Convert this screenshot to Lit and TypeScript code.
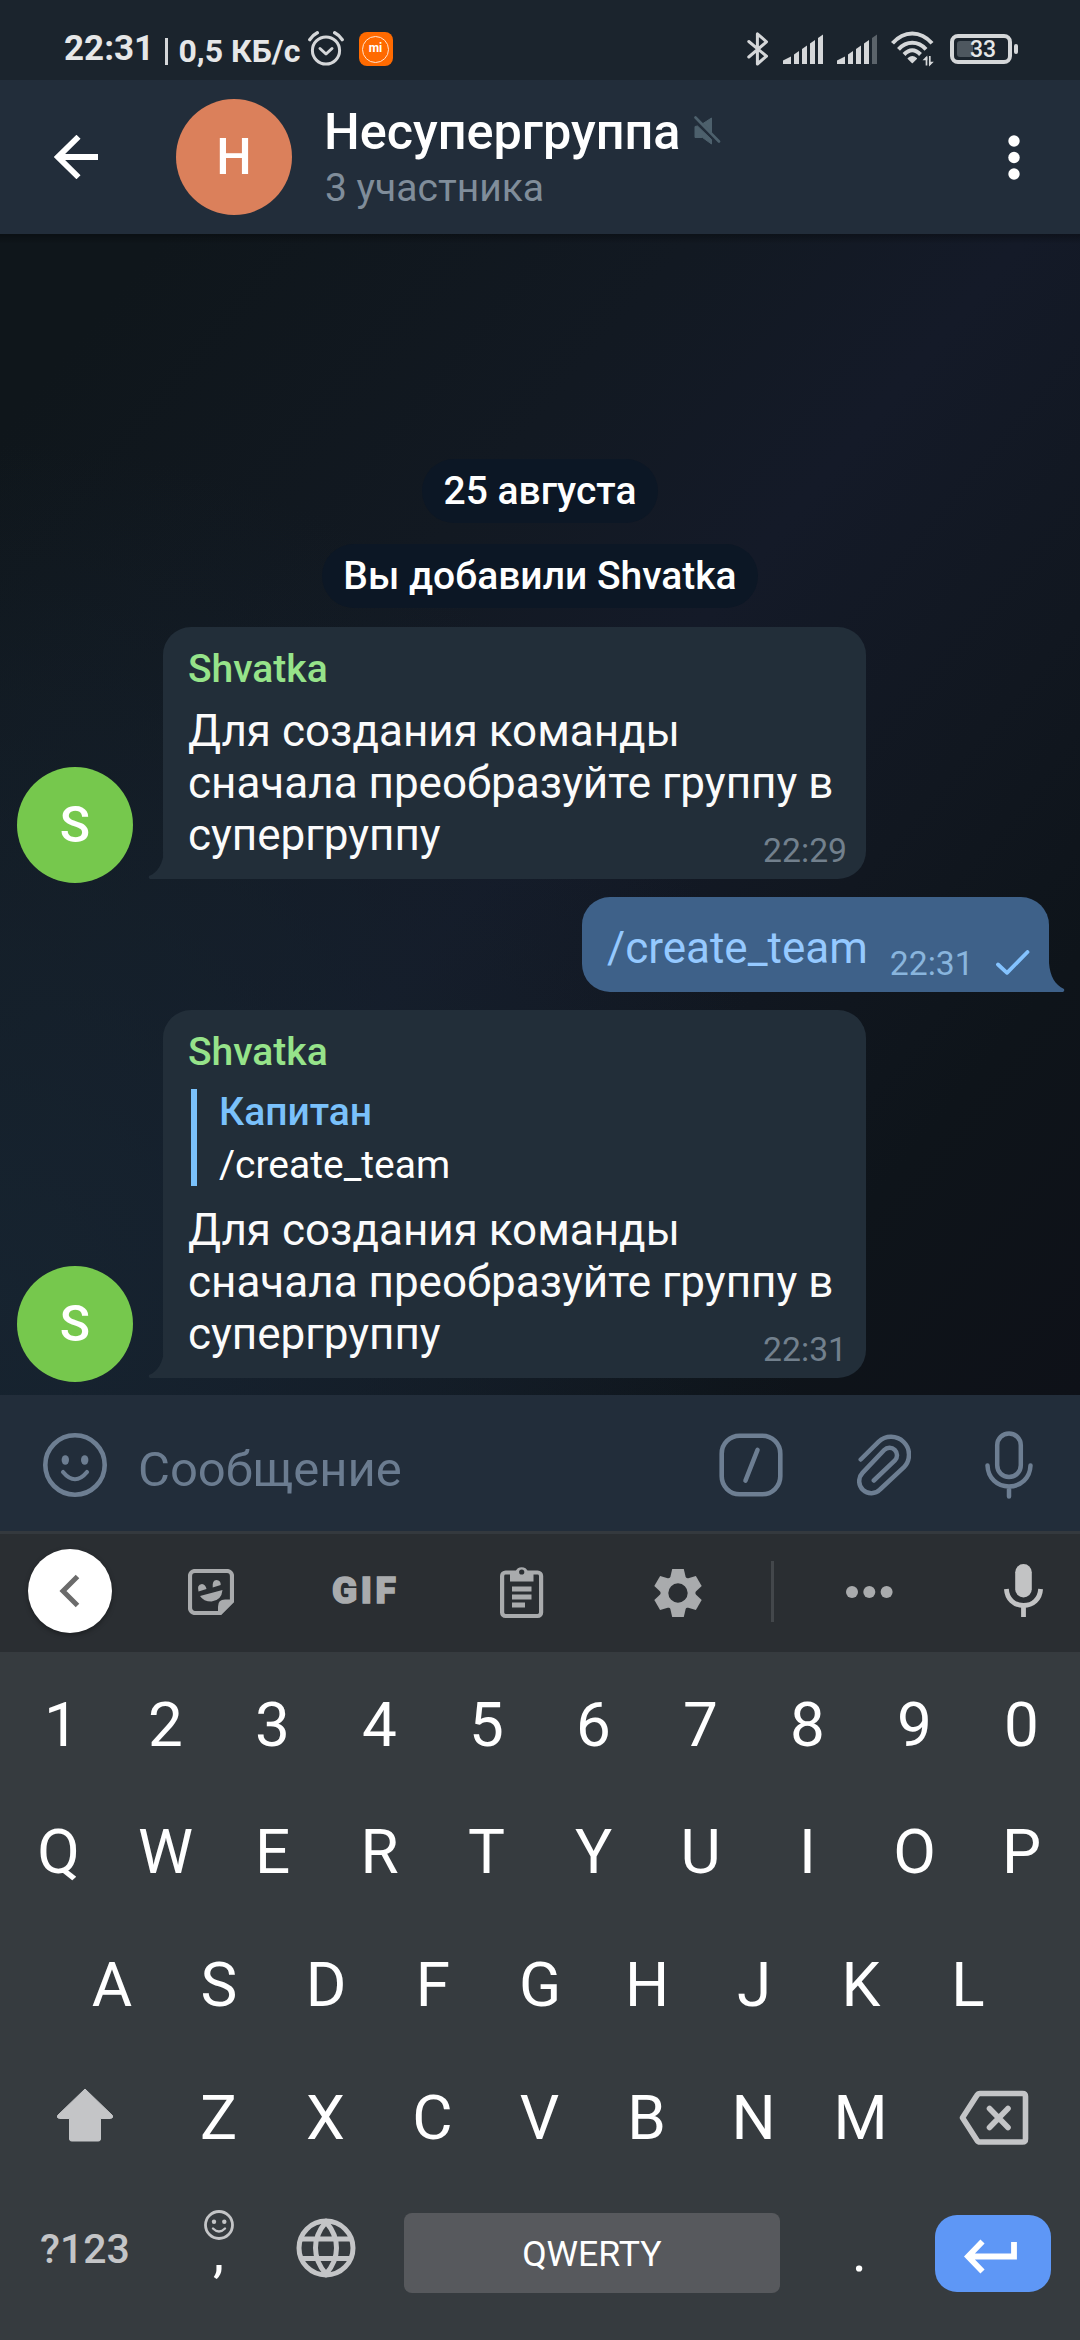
import { LitElement, html, css, svg, nothing, type TemplateResult } from "lit";
import { customElement, property } from "lit/decorators.js";

const icon = (w: number, h: number, body: TemplateResult) =>
  html`<svg width=${w} height=${h} viewBox="0 0 ${w} ${h}">${body}</svg>`;

const alarm = icon(36, 36, svg`
  <g fill="none" stroke="#d5d7d9" stroke-width="3">
    <circle cx="18" cy="19.5" r="13.6"/>
    <path d="M12 17.5l6 5.5 6-5.5" stroke-linecap="round" stroke-linejoin="round"/>
    <path d="M1.8 8.6Q4.6 4.2 9.3 1.8M34.2 8.6Q31.4 4.2 26.7 1.8" stroke-width="3.4" stroke-linecap="round"/>
  </g>`);

const bluetooth = icon(22, 36, svg`
  <path d="M1.8 10.5L19.5 25.2 10.4 33V2.8L19.5 10.8 1.8 26" fill="none" stroke="#d5d7d9" stroke-width="3" stroke-linecap="round" stroke-linejoin="round"/>`);

const signal = (dim: boolean) => icon(40, 30, svg`
  <g fill="#d5d7d9">
    <path d="M0 30v-3.5L8 22.6V30z"/>
    <path d="M11 30V20.5L16 17v13z"/>
    <path d="M19 30V15l5-3.5V30z"/>
    <path d="M27 30V9.5L32 6v24z"/>
    <path d="M35 30V4l5-3.5V30z" fill=${dim ? "#5b636a" : "#d5d7d9"}/>
  </g>`);

const wifi = icon(44, 36, svg`
  <g fill="none" stroke="#d5d7d9" stroke-width="4">
    <path d="M1.5 12.3C13-0.8 29.500-0.8 41 12.300"/>
    <path d="M7.500 18.300C15.500 9.600 27 9.600 35 18.300"/>
    <path d="M13 23.500C18.500 17.800 24 17.800 29.500 23.500"/>
  </g>
  <path d="M17.300 27.500Q21.300 24 25.300 27.500L21.300 31.500z" fill="#d5d7d9" stroke="#d5d7d9" stroke-width="1.500" stroke-linejoin="round"/>
  <path d="M35.500 34.500V26M38.800 25V34" stroke="#d5d7d9" stroke-width="1.700"/>
  <path d="M31.500 29.300L36.300 24.500V29.300zM38 30.700H42.800L38 35.500z" fill="#d5d7d9"/>`);

const back = icon(44, 44, svg`
  <path d="M44 22H4M24.500 1.800L4 22l20.500 20.200" fill="none" stroke="#fff" stroke-width="5.800"/>`);

const muted = icon(27, 29, svg`
  <path d="M9 7.500L17.500 2V16.500zM1 10.500L3.500 10 17.500 23.500V28L8.500 21.500H1z" fill="#4d606c" stroke="#4d606c" stroke-width="1" stroke-linejoin="round"/>
  <path d="M1.500 1.500L25 25.500" stroke="#4d606c" stroke-width="2.600" stroke-linecap="round"/>`);

const more = icon(12, 45, svg`
  <g fill="#fff"><circle cx="6" cy="6" r="5.700"/><circle cx="6" cy="22.500" r="5.700"/><circle cx="6" cy="39" r="5.700"/></g>`);

const check = icon(34, 25, svg`
  <path d="M2 14.500L11 22.800 31.500 2" fill="none" stroke="#84c3ff" stroke-width="3.800" stroke-linecap="round" stroke-linejoin="round"/>`);

const smile = icon(64, 64, svg`
  <circle cx="32" cy="32" r="29.700" fill="none" stroke="#6d7e92" stroke-width="4.600"/>
  <ellipse cx="22.300" cy="27" rx="3.700" ry="4.800" fill="#6d7e92"/>
  <ellipse cx="41.700" cy="27" rx="3.700" ry="4.800" fill="#6d7e92"/>
  <path d="M20 39Q32 53.500 44 39" fill="none" stroke="#6d7e92" stroke-width="4.200" stroke-linecap="round"/>`);

const command = icon(64, 64, svg`
  <rect x="2.700" y="2.700" width="58.600" height="58.600" rx="18" fill="none" stroke="#6d7e92" stroke-width="4.600"/>
  <path d="M38.500 17L26.500 47.500" stroke="#6d7e92" stroke-width="4.600" stroke-linecap="round"/>`);

const clip = icon(54, 62, svg`
  <path d="M3.700 25.500L21.500 7.800A18 18 0 0 1 47 33.200L23 55.500A12 12 0 0 1 5.500 38.900L27.200 16A7.400 7.400 0 0 1 37.900 26.400L16.800 46.500" fill="none" stroke="#6d7e92" stroke-width="4.500" stroke-linecap="round" stroke-linejoin="round"/>`);

const mic = icon(48, 68, svg`
  <g fill="none" stroke="#6d7e92" stroke-width="4.500" stroke-linecap="round">
    <rect x="12.200" y="2.500" width="23.600" height="43.500" rx="11.800"/>
    <path d="M2.500 34.500C3 47 12 55.500 24 55.500S45 47 45.500 34.500M24 56V65.500"/>
  </g>`);

const chevron = icon(22, 34, svg`<path d="M19.500 2.500L5 17l14.500 14.500" fill="none" stroke="#6b6b6b" stroke-width="5"/>`);

const sticker = icon(46, 46, svg`
  <path d="M7 2H39a5 5 0 0 1 5 5V32L32 44H7a5 5 0 0 1-5-5V7a5 5 0 0 1 5-5z" fill="none" stroke="#a9abad" stroke-width="4.200"/>
  <path d="M30 46V37.500Q30 30.500 37 30.500H46V33L33 46z" fill="#a9abad"/>
  <path d="M10.500 22.500Q8.500 15.500 14 15Q17.500 15.500 18.500 20zM24.700 18.500Q24 11 28.500 11Q33 11.500 32.700 16zM12 27L34.500 21Q33.500 31.500 23.500 32.500Q15.500 32.500 12 27z" fill="#a9abad"/>`);

const clipboard = icon(44, 54, svg`
  <rect x="2.100" y="7.500" width="39" height="43.500" rx="3.500" fill="none" stroke="#a9abad" stroke-width="4.200"/>
  <path d="M10 16.500V6.500H15.500A6.600 6.600 0 0 1 27.900 6.500H33.500V16.500z" fill="#a9abad"/>
  <circle cx="21.700" cy="7" r="2.600" fill="#2a2e32"/>
  <path d="M12 24H31.500M12 32H31.500M12 40H25" stroke="#a9abad" stroke-width="5"/>`);

const gear = icon(52, 52, svg`
  <g transform="translate(26 26)">
    <circle r="13.600" fill="none" stroke="#a9abad" stroke-width="7.800"/>
    ${[0, 60, 120, 180, 240, 300].map((a) => svg`<path transform="rotate(${a})" d="M-8-14.500L-5.800-24H5.800L8-14.500z" fill="#a9abad"/>`)}
  </g>`);

const dots = icon(48, 14, svg`
  <g fill="#a9abad"><circle cx="7" cy="7" r="6"/><circle cx="24.300" cy="7" r="6"/><circle cx="41.600" cy="7" r="6"/></g>`);

const kbMic = icon(39, 53, svg`
  <rect x="11.200" y="0" width="16.600" height="33.500" rx="8.300" fill="#c2c3c4"/>
  <path d="M2.400 25C3 35 10 41.500 19.500 41.500S36 35 36.600 25M19.500 41V53" fill="none" stroke="#c2c3c4" stroke-width="4.800"/>`);

const shift = icon(58, 56, svg`
  <path d="M29 2L56.500 28.500Q57.500 31 54.500 31.500H44.500V52Q44.500 54 42.500 54H15.500Q13.500 54 13.500 52V31.500H3.500Q0.500 31 1.500 28.500z" fill="#c4c5c7" stroke="#c4c5c7" stroke-width="1" stroke-linejoin="round"/>`);

const backspace = icon(70, 56, svg`
  <path d="M21 3.500H63.500Q66.500 3.500 66.500 6.500V49Q66.500 52 63.500 52H21Q19 52 17.800 50L3.500 27.800 17.800 5.500Q19 3.500 21 3.500z" fill="none" stroke="#c4c5c7" stroke-width="5.600" stroke-linejoin="round"/>
  <path d="M30.500 18.500L49 37.500M49 18.500L30.500 37.500" stroke="#c4c5c7" stroke-width="5.600" stroke-linecap="round"/>`);

const emoji = icon(30, 30, svg`
  <circle cx="15" cy="15" r="13.500" fill="none" stroke="#c4c5c7" stroke-width="2.800"/>
  <circle cx="10" cy="11.700" r="2.200" fill="#c4c5c7"/><circle cx="20.300" cy="11.700" r="2.200" fill="#c4c5c7"/>
  <path d="M9 18.500Q15 24.500 21 18.500" fill="none" stroke="#c4c5c7" stroke-width="2.400" stroke-linecap="round"/>`);

const globe = icon(60, 60, svg`
  <g fill="none" stroke="#c4c5c7" stroke-width="5">
    <circle cx="30" cy="30" r="27"/>
    <path d="M4 21H56M4 40.500H56M30 4C16 20 16 40 30 56C44 40 44 20 30 4z"/>
  </g>`);

const enter = icon(54, 36, svg`
  <path d="M50 3V17.500H4.500M18.500 2.500L4 17.500 18.500 32.500" fill="none" stroke="#fff" stroke-width="5.800"/>`);

@customElement("chat-bubble")
export class ChatBubble extends LitElement {
  @property() author = "";
  @property() time = "";
  @property({ attribute: false }) lines: string[] = [];
  @property({ attribute: false }) quote?: { author: string; text: string };

  static styles = css`
    :host { display: flex; align-items: flex-end; }
    .avatar {
      flex: none; width: 116px; height: 116px; border-radius: 50%;
      margin: 0 30px -4px 17px; background: #76c84d; color: #fff;
      display: flex; align-items: center; justify-content: center;
      font-size: 50px; font-weight: 500; line-height: 1;
    }
    .bubble {
      position: relative; box-sizing: border-box; width: 703px;
      padding: 17px 19px 18px 25px; border-radius: 28px 28px 28px 0;
      background: #222e39; display: flex; flex-direction: column;
    }
    .tail { position: absolute; left: -15.500px; bottom: 0; }
    .author { font-size: 39px; line-height: 50px; font-weight: 500; color: #96e38a; }
    .quote {
      margin: 12px 0 7px 3px; height: 97px; border-left: 6px solid #7ac1fb;
      padding-left: 22px; display: flex; flex-direction: column; gap: 8px;
      font-size: 39px; color: #fff;
    }
    .who { font-weight: 500; line-height: 46px; color: #7ac1fb; }
    .what { line-height: 44px; }
    .text { margin-top: 11px; font-size: 44px; line-height: 52px; color: #fbfbfb; white-space: nowrap; }
    .last { display: flex; justify-content: space-between; height: 52px; }
    .time { margin-top: 21.500px; font-size: 33.700px; line-height: 40px; color: #72808d; }
  `;

  render() {
    const body = this.lines.slice(0, -1);
    const last = this.lines[this.lines.length - 1];
    return html`
      <div class="avatar">${this.author.charAt(0)}</div>
      <div class="bubble">
        <svg class="tail" width="16" height="28" viewBox="0 0 16 28">
          <path d="M16 0C15 12 10 21.500 1 25Q0 26.500 1.800 28H16z" fill="#222e39"/>
        </svg>
        <div class="author">${this.author}</div>
        ${this.quote
          ? html`<div class="quote"><div class="who">${this.quote.author}</div><div class="what">${this.quote.text}</div></div>`
          : nothing}
        <div class="text">
          ${body.map((line) => html`<div>${line}</div>`)}
          <div class="last"><div>${last}</div><div class="time">${this.time}</div></div>
        </div>
      </div>`;
  }
}

@customElement("phone-keyboard")
export class PhoneKeyboard extends LitElement {
  static styles = css`
    :host { display: block; background: #363b3f; color: #fff; }
    .toolbar {
      box-sizing: border-box; height: 121px; border-top: 3px solid #34393e;
      padding: 0 37px 3px 28px; background: #2a2e32; display: flex; align-items: center;
    }
    .collapse {
      width: 84px; height: 84px; border-radius: 50%; background: #fff; margin: -1px 76px 0 0;
      box-shadow: 0 2px 5px rgba(0, 0, 0, 0.35);
      display: flex; align-items: center; justify-content: center;
    }
    .collapse svg { margin-left: -3px; }
    .gif {
      width: 67px; margin: -1px 101px 0 98px; font-weight: 900; font-size: 37px;
      line-height: 40px; letter-spacing: 3.500px; color: #a9abad; white-space: nowrap;
      -webkit-text-stroke: 1.500px #a9abad;
    }
    .gear { display: flex; margin: 3px 67px 0 108px; }
    .divider { width: 3px; height: 61px; background: #43474b; margin-right: 71px; }
    .mic { display: flex; margin-left: auto; margin-top: -2px; }
    .keys { padding: 6px 5px 18px; display: flex; flex-direction: column; }
    .row { display: grid; grid-template-columns: repeat(10, 107px); height: 133px; }
    .digits { height: 127px; }
    .digits .key:first-child { padding-left: 6px; }
    .home { padding-left: 53.500px; }
    .third { grid-template-columns: 160px repeat(7, 107px) 160px; }
    .key { text-align: center; font-size: 62px; line-height: 133px; }
    .cell { display: flex; align-items: center; justify-content: center; }
    .shift { padding-bottom: 6px; }
    .bottom { display: flex; height: 138px; align-items: center; }
    .symbols {
      width: 160px; text-align: center; font-size: 41px; font-weight: 500;
      line-height: 48px; margin-top: -8px; color: #c4c5c7;
    }
    .comma { width: 107px; display: flex; flex-direction: column; align-items: center; margin-top: -20px; }
    .comma-mark { font-size: 56px; line-height: 40px; margin-top: -8px; padding-bottom: 4px; }
    .globe { width: 107px; display: flex; justify-content: center; margin-top: -11px; }
    .space {
      width: 376px; height: 80px; margin: 0 26px 0 25px; border-radius: 8px;
      background: #57595d; text-align: center; font-size: 35.600px; line-height: 83px;
    }
    .period { width: 107px; text-align: center; font-size: 56px; line-height: 60px; margin-top: -2px; }
    .enter {
      width: 116px; height: 77px; margin-left: 22px; border-radius: 22px; background: #5e97f6;
      display: flex; align-items: center; justify-content: center;
    }
    .enter svg { margin: 8px 0 0 -4px; }
  `;

  private keys(letters: string) {
    return [...letters].map((k) => html`<div class="key">${k}</div>`);
  }

  render() {
    return html`
      <div class="toolbar">
        <div class="collapse">${chevron}</div>
        ${sticker}
        <div class="gif">GIF</div>
        ${clipboard}
        <div class="gear">${gear}</div>
        <div class="divider"></div>
        ${dots}
        <div class="mic">${kbMic}</div>
      </div>
      <div class="keys">
        <div class="row digits">${this.keys("1234567890")}</div>
        <div class="row">${this.keys("QWERTYUIOP")}</div>
        <div class="row home">${this.keys("ASDFGHJKL")}</div>
        <div class="row third">
          <div class="cell shift">${shift}</div>
          ${this.keys("ZXCVBNM")}
          <div class="cell">${backspace}</div>
        </div>
        <div class="bottom">
          <div class="symbols">?123</div>
          <div class="comma">${emoji}<div class="comma-mark">,</div></div>
          <div class="globe">${globe}</div>
          <div class="space">QWERTY</div>
          <div class="period">.</div>
          <div class="enter">${enter}</div>
        </div>
      </div>`;
  }
}

@customElement("app-root")
export class AppRoot extends LitElement {
  static styles = css`
    :host {
      display: flex; flex-direction: column; width: 1080px; height: 2340px;
      overflow: hidden; font-family: Roboto, "Liberation Sans", sans-serif; background: #363b3f;
    }
    .status {
      flex: none; box-sizing: border-box; height: 80px; padding: 18px 64px 0; background: #1b242d;
      display: flex; align-items: center; color: #e6e7e8; font-weight: 700; white-space: pre;
    }
    .clock { font-size: 35px; line-height: 40px; width: 86px; }
    .bar { width: 2.500px; height: 27px; background: #d5d7d9; margin: 4px 11px 0 15px; }
    .speed { font-size: 32px; line-height: 40px; margin-top: 3px; width: 129px; }
    .mi {
      width: 34px; height: 34px; border-radius: 8px; background: #ff6a00; margin-left: 15px;
      display: flex; align-items: center; justify-content: center;
    }
    .ring {
      box-sizing: border-box; width: 27px; height: 27px; border: 1.500px solid #ffe3cf;
      border-radius: 50%; text-align: center; font-size: 12px; line-height: 22px; color: #fff;
    }
    .sys { margin-left: auto; display: flex; align-items: center; gap: 14px; }
    .battery {
      position: relative; box-sizing: border-box; width: 62px; height: 30px; margin: 0 4px 0 1px;
      border: 4px solid #d5d7d9; border-radius: 8px; text-align: center;
      font-size: 23px; line-height: 24px; font-weight: 500; display: flex;
    }
    .charge { width: 16px; height: 16px; margin: 3px 0 0 3px; border-radius: 3px; background: #4e575f; }
    .level { position: absolute; left: 0; right: 0; top: 0; text-indent: 4px; }
    .nub { position: absolute; right: -10px; top: 6px; width: 4px; height: 10px; border-radius: 2px; background: #d5d7d9; }
    .header { flex: none; box-sizing: border-box; height: 154px; background: #222d3a; display: flex; padding: 0 60px 0 54px; }
    .back { display: flex; align-items: center; width: 122px; }
    .group {
      width: 116px; height: 116px; margin: 19px 32px 0 0; border-radius: 50%; background: #db805b;
      color: #fff; font-size: 50px; font-weight: 500; display: flex; align-items: center; justify-content: center;
    }
    .titles { padding-top: 22px; }
    .title { display: flex; font-size: 50.400px; line-height: 60px; font-weight: 500; color: #fff; }
    .title svg { margin: 14px 0 0 14px; }
    .members { margin-top: 2px; padding-left: 1px; font-size: 39px; line-height: 48px; color: #808d9a; }
    .more { margin-left: auto; display: flex; align-items: center; }
    .chat {
      flex: none; box-sizing: border-box; height: 1161px; padding-top: 225px;
      display: flex; flex-direction: column; align-items: flex-start;
      background:
        linear-gradient(180deg, rgba(0, 0, 0, 0.300), rgba(0, 0, 0, 0) 10px),
        radial-gradient(ellipse 800px 860px at 0 92%, rgba(23, 37, 49, 0.850), rgba(22, 35, 47, 0.500) 55%, rgba(20, 32, 44, 0) 100%),
        linear-gradient(130deg, #0f161b 8%, #121922 34%, #141a28 50%, #111720 68%, #0e141a 82%, #0e1118 100%);
    }
    .service {
      align-self: center; padding: 0 21.500px; border-radius: 32px; background: #0c1725;
      color: #fff; font-size: 39px; line-height: 64px; font-weight: 500; margin-bottom: 21px;
    }
    .added { margin-bottom: 19px; }
    .out {
      position: relative; box-sizing: border-box; align-self: flex-end; margin: 18px 31px 18px 0;
      width: 467px; height: 95px; padding-left: 25px; border-radius: 28px 28px 0 28px;
      background: #3e6189; display: flex; align-items: flex-start;
    }
    .command { margin-top: 25px; font-size: 44px; line-height: 52px; color: #95c9ff; }
    .sent { margin: 46.500px 22px 0 22px; font-size: 33.700px; line-height: 40px; color: #89b5dd; }
    .out .ok { display: flex; margin-top: 53px; }
    .tail { position: absolute; right: -15.500px; bottom: 0; }
    .composer {
      flex: none; box-sizing: border-box; height: 136px; padding: 4px 47px 0 43px; background: #222d3a;
      display: flex; align-items: center;
    }
    .placeholder { margin: 10px auto 0 31px; font-size: 49px; line-height: 60px; color: #6b7c90; }
    .tools { display: flex; align-items: center; }
    .tools svg:nth-child(2) { margin: 0 74px; }
  `;

  render() {
    const reply = ["Для создания команды", "сначала преобразуйте группу в", "супергруппу"];
    return html`
      <div class="status">
        <div class="clock">22:31</div>
        <div class="bar"></div>
        <div class="speed">0,5 КБ/с</div>
        ${alarm}
        <div class="mi"><div class="ring">mi</div></div>
        <div class="sys">
          ${bluetooth}${signal(false)}${signal(true)}${wifi}
          <div class="battery"><div class="charge"></div><div class="level">33</div><div class="nub"></div></div>
        </div>
      </div>
      <div class="header">
        <div class="back">${back}</div>
        <div class="group">Н</div>
        <div class="titles">
          <div class="title">Несупергруппа${muted}</div>
          <div class="members">3 участника</div>
        </div>
        <div class="more">${more}</div>
      </div>
      <div class="chat">
        <div class="service">25 августа</div>
        <div class="service added">Вы добавили Shvatka</div>
        <chat-bubble author="Shvatka" .lines=${reply} time="22:29"></chat-bubble>
        <div class="out">
          <svg class="tail" width="16" height="29" viewBox="0 0 16 29">
            <path d="M0 0C1 13 6 22 15 26Q16 27.500 14.200 29H0z" fill="#3e6189"/>
          </svg>
          <div class="command">/create_team</div>
          <div class="sent">22:31</div>
          <div class="ok">${check}</div>
        </div>
        <chat-bubble author="Shvatka" .lines=${reply} time="22:31" .quote=${{ author: "Капитан", text: "/create_team" }}></chat-bubble>
      </div>
      <div class="composer">
        ${smile}
        <div class="placeholder">Сообщение</div>
        <div class="tools">${command}${clip}${mic}</div>
      </div>
      <phone-keyboard></phone-keyboard>`;
  }
}
